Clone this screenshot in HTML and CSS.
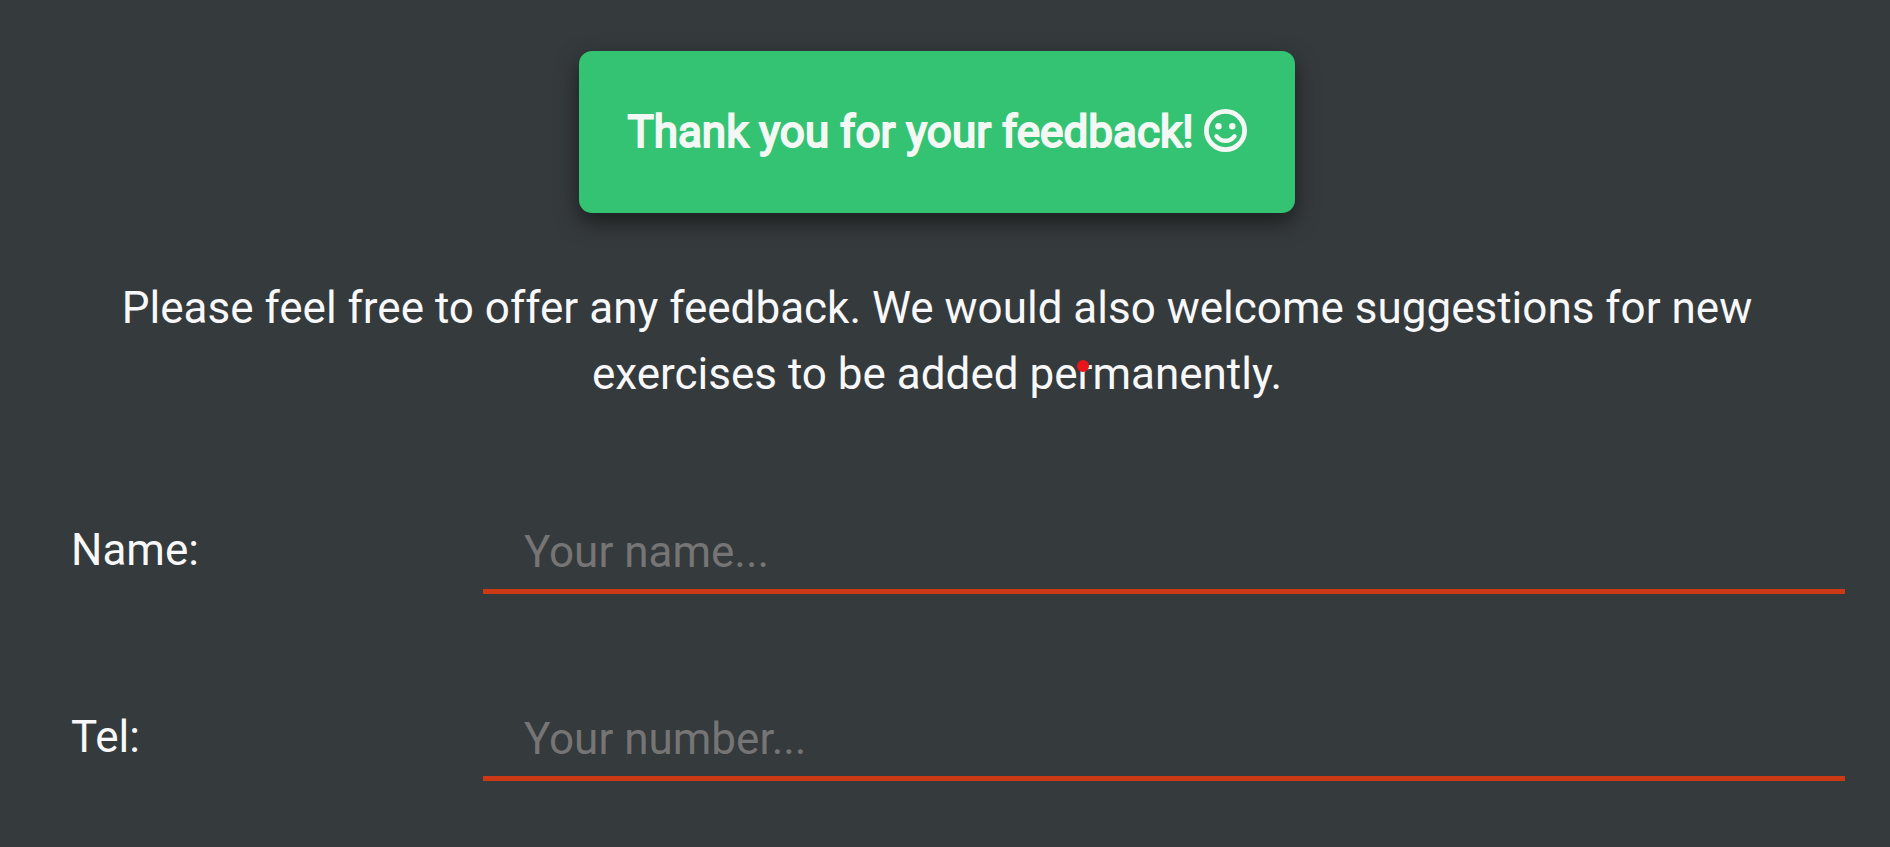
FILE: index.html
```html
<!DOCTYPE html>
<html lang="en">
<head>
<meta charset="utf-8">
<title>Feedback</title>
<link rel="stylesheet" href="styles.css">
</head>
<body>
<main class="page">
  <h1 class="banner" role="status">
    <span>Thank you for your feedback!</span>
    <svg class="smile" viewBox="0 0 43 43" aria-hidden="true">
      <circle cx="21.5" cy="21.5" r="19.1" fill="none" stroke="currentColor" stroke-width="4.8"/>
      <circle cx="14.5" cy="17.2" r="3.2" fill="currentColor"/>
      <circle cx="28.3" cy="17.2" r="3.2" fill="currentColor"/>
      <path d="M12.5 27.3C17.3 33.3 25.7 33.3 30.5 27.3" fill="none" stroke="currentColor" stroke-width="4.4" stroke-linecap="round"/>
    </svg>
  </h1>
  <div class="intro">
    <p class="intro-text">Please feel free to offer any feedback. We would also welcome suggestions for new exercises to be added permanently.</p>
    <span class="pointer" aria-hidden="true"></span>
  </div>
  <form class="form">
    <div class="row">
      <label class="label" for="name">Name:</label>
      <input class="field" id="name" type="text" placeholder="Your name...">
    </div>
    <div class="row">
      <label class="label" for="tel">Tel:</label>
      <input class="field" id="tel" type="tel" placeholder="Your number...">
    </div>
  </form>
</main>
</body>
</html>
```
FILE: styles.css
```css
* {
  box-sizing: border-box;
}

body {
  margin: 0;
  background: #353a3c;
  color: #f8f8fa;
  font-family: Roboto, sans-serif;
  font-size: 44px;
  line-height: 66px;
}

.page {
  display: flex;
  flex-direction: column;
  align-items: center;
  padding: 51px 45px 0 29px;
}

.banner {
  display: flex;
  align-items: center;
  gap: 10px;
  margin: 0;
  padding: 48px;
  border-radius: 13px;
  background: #34c373;
  box-shadow: 0 9px 22px rgba(0, 0, 0, 0.5);
  color: #f4f8f5;
  font-size: 44px;
  font-weight: 400;
  -webkit-text-stroke: 2px currentColor;
}

.smile {
  width: 43px;
  height: 43px;
  margin-bottom: 4px;
}

.intro {
  position: relative;
  margin-top: 62px;
  padding: 0 48px;
}

.intro-text {
  margin: 0;
  text-align: center;
}

/* Red pointer mark floating over the text */
.pointer {
  position: absolute;
  top: 85px;
  left: calc(50% + 140px);
  width: 12px;
  height: 12px;
  border-radius: 50%;
  background: #e8151b;
}

.form {
  display: flex;
  flex-direction: column;
  gap: 88px;
  align-self: stretch;
  margin-top: 88px;
  padding-left: 42px;
}

.row {
  display: grid;
  grid-template-columns: 412px 1fr;
}

.label {
  padding-top: 22px;
}

.field {
  width: 100%;
  height: 99px;
  padding: 20px 41px 0;
  border: 0;
  border-bottom: 5px solid #cc3a15;
  background: transparent;
  color: inherit;
  font: inherit;
  outline: 0;
}

.field::placeholder {
  color: #757575;
  opacity: 1;
}
```
